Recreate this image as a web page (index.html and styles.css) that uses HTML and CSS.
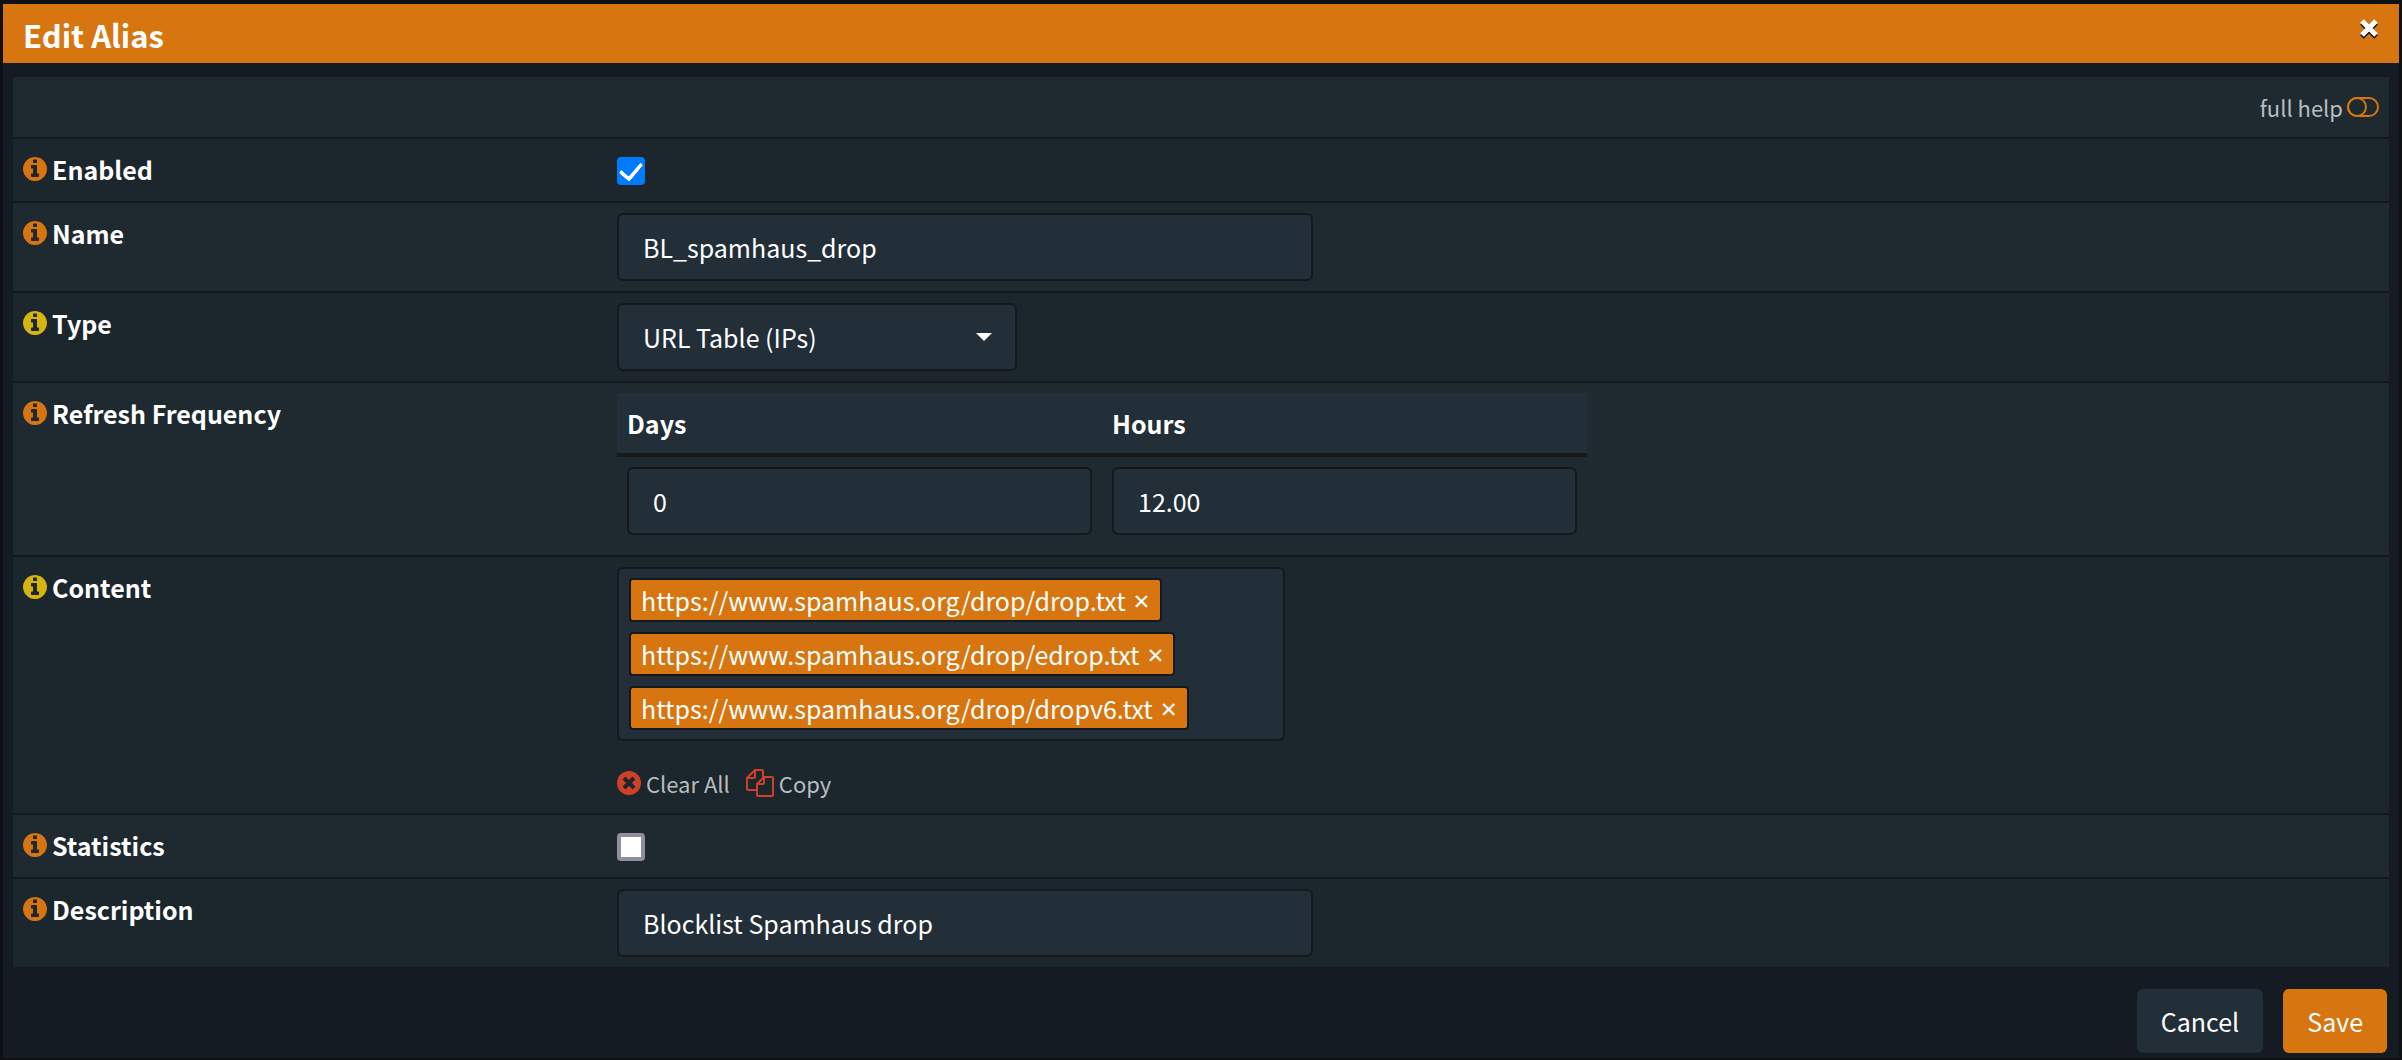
FILE: index.html
```html
<!DOCTYPE html>
<html lang="en">
<head>
    <meta charset="UTF-8">
    <meta name="viewport" content="width=device-width, initial-scale=1.0">
    <title>Edit Alias</title>
    <link rel="stylesheet" href="styles.css">
</head>
<body>
    <!-- Shared icons -->
    <svg class="icon-defs" aria-hidden="true">
        <symbol id="icon-info" viewBox="0 0 1536 1536">
            <path d="M1024 1248v-160q0-14-9-23t-23-9h-96v-512q0-14-9-23t-23-9h-320q-14 0-23 9t-9 23v160q0 14 9 23t23 9h96v320h-96q-14 0-23 9t-9 23v160q0 14 9 23t23 9h448q14 0 23-9t9-23zM896 352v-160q0-14-9-23t-23-9h-192q-14 0-23 9t-9 23v160q0 14 9 23t23 9h192q14 0 23-9t9-23zM1536 768q0 209-103 385.5t-279.5 279.5-385.5 103-385.5-103-279.5-279.5-103-385.5 103-385.5 279.5-279.5 385.5-103 385.5 103 279.5 279.5 103 385.5z"/>
        </symbol>
    </svg>

    <div class="modal">
        <div class="modal-header">
            <h1>Edit Alias</h1>
            <button type="button" class="close" aria-label="Close">
                <svg viewBox="0 0 20 22"><path class="close-shadow" d="M3 5l14 14M17 5L3 19"/><path class="close-mark" d="M3 3l14 14M17 3L3 17"/></svg>
            </button>
        </div>

        <form class="modal-body">
            <div class="form-table">
                <div class="help-row">
                    <a href="#" class="help-link">full help
                        <svg class="toggle" viewBox="0 0 32 20"><rect x="1" y="1" width="30" height="18" rx="9"/><circle cx="10" cy="10" r="9"/></svg>
                    </a>
                </div>

                <div class="row">
                    <label class="name" for="enabled"><svg class="info"><use href="#icon-info"/></svg>Enabled</label>
                    <div class="field"><input type="checkbox" id="enabled" checked></div>
                </div>

                <div class="row">
                    <label class="name" for="name"><svg class="info"><use href="#icon-info"/></svg>Name</label>
                    <div class="field"><input type="text" id="name" value="BL_spamhaus_drop"></div>
                </div>

                <div class="row">
                    <label class="name" for="type"><svg class="info advanced"><use href="#icon-info"/></svg>Type</label>
                    <div class="field">
                        <div class="select">
                            <select id="type">
                                <option>URL Table (IPs)</option>
                            </select>
                        </div>
                    </div>
                </div>

                <div class="row">
                    <div class="name"><svg class="info"><use href="#icon-info"/></svg>Refresh Frequency</div>
                    <div class="field">
                        <table class="frequency">
                            <thead>
                                <tr><th><label for="days">Days</label></th><th><label for="hours">Hours</label></th></tr>
                            </thead>
                            <tbody>
                                <tr>
                                    <td><input type="text" id="days" value="0"></td>
                                    <td><input type="text" id="hours" value="12.00"></td>
                                </tr>
                            </tbody>
                        </table>
                    </div>
                </div>

                <div class="row">
                    <div class="name"><svg class="info advanced"><use href="#icon-info"/></svg>Content</div>
                    <div class="field">
                        <ul class="tokens">
                            <li><span>https://www.spamhaus.org/drop/drop.txt</span><button type="button" aria-label="Remove">×</button></li>
                            <li><span>https://www.spamhaus.org/drop/edrop.txt</span><button type="button" aria-label="Remove">×</button></li>
                            <li><span>https://www.spamhaus.org/drop/dropv6.txt</span><button type="button" aria-label="Remove">×</button></li>
                        </ul>
                        <div class="token-links">
                            <a href="#"><svg class="clear-icon" viewBox="0 0 24 24"><circle cx="12" cy="12" r="12"/><path d="M7 7l10 10M17 7L7 17"/></svg>Clear All</a>
                            <a href="#"><svg class="copy-icon" viewBox="0 0 28 28"><path d="M11 21H2q-1 0-1-1V9l8-8h7q1 0 1 1v6M9 1v7q0 1-1 1H1"/><path d="M11 15l7-7h8q1 0 1 1v17q0 1-1 1H12q-1 0-1-1zM18 8v6q0 1-1 1h-6"/></svg>Copy</a>
                        </div>
                    </div>
                </div>

                <div class="row">
                    <label class="name" for="statistics"><svg class="info"><use href="#icon-info"/></svg>Statistics</label>
                    <div class="field"><input type="checkbox" id="statistics"></div>
                </div>

                <div class="row">
                    <label class="name" for="description"><svg class="info"><use href="#icon-info"/></svg>Description</label>
                    <div class="field"><input type="text" id="description" value="Blocklist Spamhaus drop"></div>
                </div>
            </div>

            <div class="modal-footer">
                <button type="button" class="btn">Cancel</button>
                <button type="submit" class="btn btn-primary">Save</button>
            </div>
        </form>
    </div>
</body>
</html>
```
FILE: styles.css
```css
* {
    box-sizing: border-box;
}

body {
    margin: 0;
    padding: 4px 3px 2px;
    background: #0e1114;
    color: #fff;
    font-family: "Source Sans Pro", "Noto Sans CJK SC", sans-serif;
    font-size: 25px;
    line-height: 40px;
}

button, input, select {
    font: inherit;
    color: inherit;
}

a {
    color: #b9bdbf;
    text-decoration: none;
}

.icon-defs {
    display: none;
}

.modal {
    background: #141b22;
}

.modal-header {
    display: flex;
    justify-content: space-between;
    align-items: flex-start;
    height: 59px;
    padding: 12px 20px 0;
    background: #d77610;
}

h1 {
    margin: 0;
    font-size: 31px;
    line-height: 38px;
    font-weight: bold;
}

.close {
    padding: 2px 0;
    border: 0;
    background: none;
    line-height: 0;
    cursor: pointer;
}

.close svg {
    width: 20px;
    height: 22px;
}

.close path {
    stroke-width: 5;
}

.close-shadow {
    stroke: #111;
}

.close-mark {
    stroke: #fff;
}

.modal-body {
    padding: 14px 10px 5px;
}

/* Form rows */
.help-row {
    height: 60px;
    padding: 10px;
    background: #1e2930;
    text-align: right;
    font-size: 22px;
}

.help-link {
    display: inline-flex;
    align-items: center;
    gap: 4px;
}

.toggle {
    width: 32px;
    height: 20px;
    fill: none;
    stroke: #d77610;
    stroke-width: 2;
}

.row {
    display: grid;
    grid-template-columns: 3fr 5fr 4fr;
    border-top: 2px solid #15191b;
    background: #1b262d;
}

.row:nth-child(odd) {
    background: #1e2930;
}

.name {
    display: flex;
    align-items: center;
    align-self: start;
    gap: 5px;
    padding: 10px;
    font-weight: bold;
}

.info {
    width: 24px;
    height: 24px;
    fill: #d77610;
}

.info.advanced {
    fill: #d5b410;
}

.field {
    padding: 10px;
    min-width: 0;
}

input[type="checkbox"] {
    appearance: none;
    display: grid;
    place-items: center;
    width: 28px;
    height: 28px;
    margin: 8px 0 6px;
    border: 4px solid #8f8f9d;
    border-radius: 4px;
    background: #fff;
}

input[type="checkbox"]:checked {
    border: 0;
    background: #007aff;
}

input[type="checkbox"]:checked::before {
    content: "";
    width: 10px;
    height: 18px;
    margin-bottom: 4px;
    border: solid #fff;
    border-width: 0 4px 4px 0;
    border-radius: 2px;
    transform: rotate(40deg);
}

input[type="text"], select {
    display: block;
    width: 100%;
    max-width: 696px;
    height: 68px;
    padding: 0 24px;
    border: 2px solid #15191b;
    border-radius: 6px;
    background: #222e38;
}

.select {
    position: relative;
    max-width: 400px;
}

select {
    appearance: none;
}

.select::after {
    content: "";
    position: absolute;
    top: 30px;
    right: 25px;
    border: 8px solid transparent;
    border-top-color: #fff;
    border-bottom: 0;
    pointer-events: none;
}

.frequency {
    width: 100%;
    table-layout: fixed;
    border-collapse: separate;
    border-spacing: 0;
}

.frequency th {
    padding: 10px;
    border-bottom: 4px solid #15191b;
    background: #222e38;
    text-align: left;
}

.frequency td {
    padding: 10px;
}

/* Token list */
.tokens {
    display: flex;
    flex-direction: column;
    align-items: flex-start;
    gap: 10px;
    max-width: 668px;
    margin: 0 0 22px;
    padding: 9px 10px;
    border: 2px solid #15191b;
    border-radius: 6px;
    background: #222e38;
    list-style: none;
}

.tokens li {
    display: flex;
    align-items: center;
    gap: 8px;
    height: 44px;
    padding: 0 10px;
    border: 2px solid #15191b;
    border-radius: 4px;
    background: #d77610;
}

.tokens button {
    padding: 0;
    border: 0;
    background: none;
    font-family: "Noto Sans", sans-serif;
    font-size: 28px;
    cursor: pointer;
}

.token-links {
    display: flex;
    gap: 16px;
    font-size: 22px;
}

.token-links a {
    display: flex;
    align-items: center;
    gap: 5px;
}

.clear-icon {
    width: 24px;
    height: 24px;
    fill: #cf4028;
}

.clear-icon path {
    stroke: #1b262d;
    stroke-width: 4;
}

.copy-icon {
    width: 28px;
    height: 28px;
    fill: none;
    stroke: #cf4028;
    stroke-width: 2;
}

/* Footer */
.modal-footer {
    display: flex;
    justify-content: flex-end;
    gap: 20px;
    padding: 22px 2px 0;
}

.btn {
    height: 64px;
    padding: 0 24px;
    border: 0;
    border-radius: 6px;
    background: #222e38;
    cursor: pointer;
}

.btn-primary {
    background: #d77610;
}
```
